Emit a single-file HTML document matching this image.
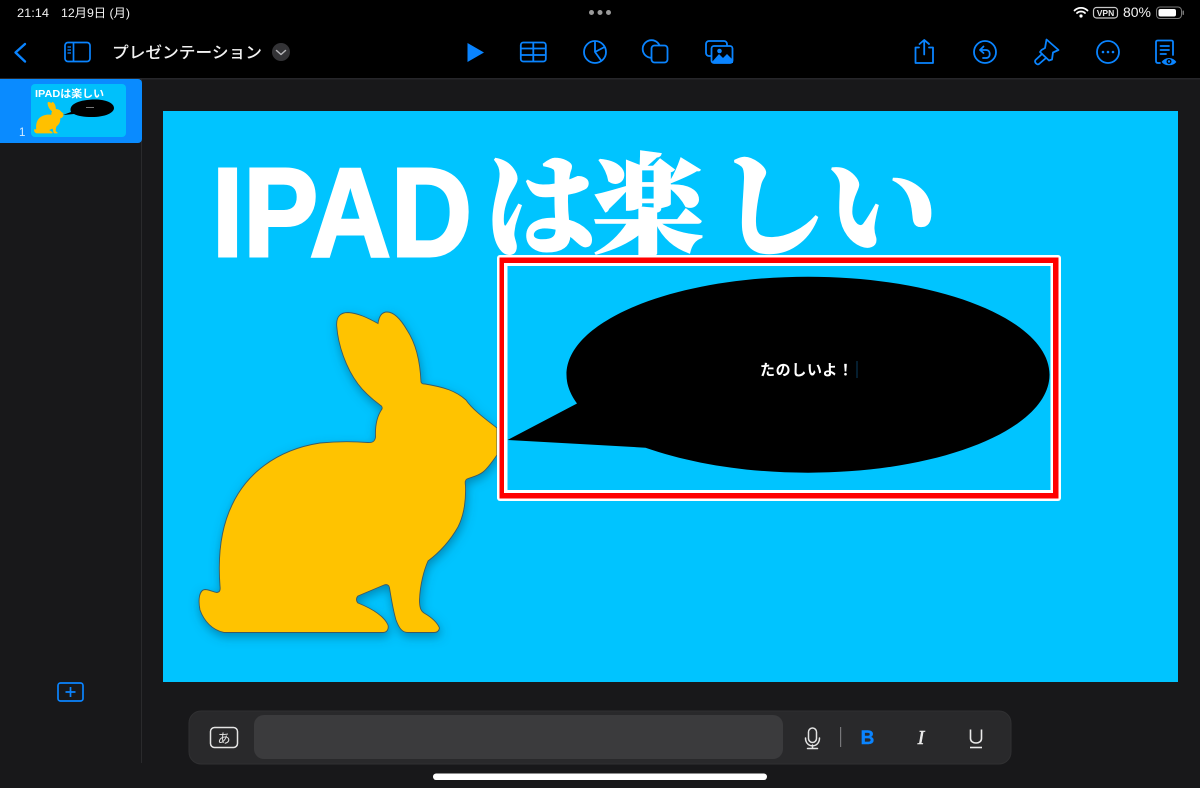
<!DOCTYPE html>
<html lang="ja"><head><meta charset="utf-8"><title>プレゼンテーション</title>
<style>
html,body{margin:0;padding:0;background:#18181a}
body{width:1200px;height:788px;overflow:hidden;position:relative;font-family:"Liberation Sans","Noto Sans CJK JP",sans-serif}
svg{position:absolute;left:0;top:0}
</style></head><body>
<svg width="1200" height="788" viewBox="0 0 1200 788" xmlns="http://www.w3.org/2000/svg">
<defs>
<filter id="sh" x="-10%" y="-10%" width="120%" height="120%"><feDropShadow dx="1" dy="4" stdDeviation="5" flood-color="#00506e" flood-opacity=".5"/></filter>
<path id="rab" d="M336.7 326C336 316 341 312.500 348 312.500C358 313 368 318 378 323.500C379 316 382 312 387 312C393 312 400 318 407 330C415 342 420 358 421 382C422 384 423 384 425 384C444 387 456 391 466 400C472 409 484 418 497 428L497 455C492 462 488 468 483 472C478 476 472 477 467 479C465 480 465 482 465.500 486C466 500 464 515 458 527C450 541 440 552 428 561C424 570 420 585 419.500 600C419.500 608 421 611 424 613C431 617 437 622 439.500 628C439 631 437 632.500 434 632.500L408 632.500C402 632.500 399 628 396 620C393 610 391 597 389.500 588C389 585 387 584 384 585L358 596C356 598 356 601 358 603C368 607 383 614 388 625C389 629 387 632.500 383 632.500L224 632.500C212 630 204 621 200 610C198 600 199 590 205 589.500C209 589.500 213 592 217 592.500C220 592 220.500 590 220 586C218 560 220 530 232 505C246 475 275 450 320 443C340 441 355 441.500 368 442.500C373 443 375 441 375.500 437C375 425 377 416 382 409C382.500 407 382 406 380 405C372 399 364 392 358 384C346 368 338 345 336.700 326Z"/>
</defs>

<!-- top bar -->
<rect width="1200" height="78" fill="#000"/>
<rect y="78" width="1200" height="1.500" fill="#26262a"/>
<text x="17" y="17" fill="#f2f2f2" font-size="12" textLength="32" lengthAdjust="spacingAndGlyphs">21:14</text>
<text x="61" y="17" fill="#f2f2f2" font-size="12" textLength="69" lengthAdjust="spacingAndGlyphs">12月9日 (月)</text>
<circle cx="591.500" cy="12.500" r="2.500" fill="#9a9a9a"/><circle cx="600" cy="12.500" r="2.500" fill="#9a9a9a"/><circle cx="608.500" cy="12.500" r="2.500" fill="#9a9a9a"/>

<!-- status right -->
<g fill="none" stroke="#fff" stroke-linecap="round">
<path d="M1074.500 10.500C1078 7 1084 7 1087.500 10.500" stroke-width="1.800"/>
<path d="M1077 13C1079 11 1083 11 1085 13" stroke-width="1.800"/>
</g>
<circle cx="1081" cy="16" r="1.600" fill="#fff"/>
<rect x="1093.500" y="7.500" width="24" height="10.500" rx="3" fill="none" stroke="#c8c8c8" stroke-width="1.200"/>
<text x="1105.500" y="16" fill="#e8e8e8" font-size="8.500" font-weight="700" text-anchor="middle">VPN</text>
<text x="1123" y="17" fill="#f2f2f2" font-size="13.500" textLength="28" lengthAdjust="spacingAndGlyphs">80%</text>
<rect x="1156.500" y="7" width="25" height="11.500" rx="3.500" fill="none" stroke="#777" stroke-width="1"/>
<rect x="1158.500" y="9" width="17.500" height="7.500" rx="2" fill="#fff"/>
<rect x="1182.500" y="10.500" width="1.500" height="4.500" rx=".7" fill="#777"/>

<!-- nav left -->
<path d="M25 44L15.500 52.500L25 61.500" fill="none" stroke="#0a84ff" stroke-width="2.400" stroke-linecap="round" stroke-linejoin="round"/>
<g fill="none" stroke="#0a84ff" stroke-width="1.700">
<rect x="65" y="42.500" width="25" height="19" rx="3"/><path d="M73.500 42.500V61.500"/>
<path d="M67.500 47H71M67.500 50H71M67.500 53H71" stroke-width="1.300"/>
</g>
<text x="112" y="58" fill="#f2f2f2" font-size="16" font-weight="500" textLength="150" lengthAdjust="spacingAndGlyphs" font-family="'Noto Sans CJK JP',sans-serif">プレゼンテーション</text>
<circle cx="281" cy="52" r="9" fill="#333336"/>
<path d="M276.500 50.500L281 54.500L285.500 50.500" fill="none" stroke="#b5b5b8" stroke-width="1.500" stroke-linecap="round" stroke-linejoin="round"/>

<!-- centre toolbar -->
<path d="M467.500 43L484 52.500L467.500 62Z" fill="#0a84ff"/>
<g fill="none" stroke="#0a84ff" stroke-width="1.800" stroke-linejoin="round">
<rect x="520.800" y="42.500" width="25" height="19" rx="2.500"/>
<path d="M521 48.500H545.500M521 55H545.500M533.300 42.500V61.500"/>
<circle cx="595" cy="52" r="11"/>
<path d="M595 41V52L601.500 61M595 52L604.500 47"/>
<circle cx="651.500" cy="49" r="8.800"/>
<rect x="651.500" y="45.500" width="16" height="17" rx="3" fill="#000"/>
<rect x="706" y="41" width="21" height="15" rx="3"/>
</g>
<rect x="711.500" y="46" width="21" height="17" rx="2.500" fill="#000" stroke="#0a84ff" stroke-width="1.800"/>
<path d="M712 62L719 54L723 58L727 54L733 60V63H712Z" fill="#0a84ff"/>
<circle cx="719.500" cy="51" r="2.300" fill="#0a84ff"/>

<!-- right toolbar -->
<g fill="none" stroke="#0a84ff" stroke-width="1.800" stroke-linecap="round" stroke-linejoin="round">
<path d="M919 47.500H915.500V63H933V47.500H929"/><path d="M924.200 54.500V40M919.500 44L924.200 40L929 44"/>
<circle cx="985" cy="52" r="11"/>
<path d="M983.500 46.500L980 50L983.500 53"/><path d="M980.500 50H986C991 50 991 58 986 58H983"/>
<path d="M1046.500 39.500L1058.500 50L1053 52.500L1052 59.500L1049 60.500L1040 52L1041.500 50L1045 48Z"/>
<path d="M1042 54L1035.500 60C1034 62 1037 65.500 1039 64L1046 58"/>
<circle cx="1108" cy="52" r="11"/>
<path d="M1160 63H1158C1156.500 63 1156 62 1156 61V42C1156 41 1156.800 40.500 1158 40.500H1171C1172.200 40.500 1173 41 1173 42V55"/>
<path d="M1160.500 46H1169M1160.500 50H1169M1160.500 54H1166"/>
</g>
<circle cx="1103" cy="52" r="1.300" fill="#0a84ff"/><circle cx="1108" cy="52" r="1.300" fill="#0a84ff"/><circle cx="1113" cy="52" r="1.300" fill="#0a84ff"/>
<path d="M1161 62C1165 56 1173 56 1177 62C1173 67 1165 67 1161 62Z" fill="#0a84ff" stroke="#000" stroke-width="1"/>
<circle cx="1169" cy="61.500" r="2.500" fill="#000"/><circle cx="1169" cy="61.500" r="1.200" fill="#0a84ff"/>

<!-- sidebar -->
<rect x="141" y="79" width="1" height="684" fill="#2a2a2c"/>
<rect x="-4" y="79" width="146" height="64" rx="4" fill="#0a8bff"/>
<rect x="31" y="84" width="95" height="53" rx="4" fill="#00c0fb"/>
<text x="35" y="97" fill="#fff" font-size="10.500" font-weight="700" textLength="69" lengthAdjust="spacingAndGlyphs">IPADは楽しい</text>
<path d="M63 115L71 112C68 104 80 99.500 95 99.500C106 99.500 114 103 114 108C114 113 105 117 92 117C84 117 78 116 74 114Z" fill="#000"/>
<rect x="86" y="107" width="8" height="1" fill="#777"/>
<use href="#rab" fill="#ffc000" transform="translate(14.600 71.400) scale(.098)"/>
<text x="19" y="136" fill="#d5ecff" font-size="11.500">1</text>
<g fill="none" stroke="#0a84ff" stroke-width="1.700">
<rect x="58" y="683" width="25" height="18" rx="2.500"/>
<path d="M70.500 687V697M65.500 692H75.500"/>
</g>

<!-- slide -->
<rect x="163" y="111" width="1015" height="571" fill="#00c4ff"/>
<text x="212" y="256" fill="#fff" stroke="#fff" stroke-width="3" font-family="'Liberation Sans',sans-serif" font-weight="700" font-size="126" textLength="260" lengthAdjust="spacingAndGlyphs">IPAD</text>
<g fill="#fff" stroke="#fff" stroke-width="1.500" font-family="'Noto Serif CJK SC','Noto Serif CJK JP',serif" font-weight="900" font-size="112">
<text x="484" y="247">は</text>
<text x="592" y="247">楽</text>
<text x="716" y="247">し</text>
<text x="826" y="247">い</text>
</g>
<use href="#rab" fill="#ffc300" stroke="#3b5a66" stroke-width=".9" filter="url(#sh)"/>

<!-- selection -->
<rect x="497" y="255" width="564" height="246" rx="3" fill="#fff"/>
<rect x="499.500" y="257.500" width="559" height="241" fill="#f00"/>
<rect x="504" y="263" width="549" height="230" fill="#fff"/>
<rect x="507.500" y="266" width="543" height="224" fill="#00c4ff"/>
<path d="M507.500 440L577 403.500C569.500 393 566.500 384 566.500 374.700C566.500 320.500 674.500 276.700 808 276.700C941.500 276.700 1049.500 320.500 1049.500 374.700C1049.500 428.900 941.500 472.700 808 472.700C747 472.700 691 463.500 645.500 447.700Z" fill="#000"/>
<text x="760" y="375" fill="#fff" font-size="15" font-weight="700" font-family="'Noto Sans CJK JP',sans-serif" textLength="93" lengthAdjust="spacing">たのしいよ！</text>
<rect x="856.500" y="361" width="1" height="17" fill="#0a3c5e"/>

<!-- bottom bar -->
<rect x="189" y="711" width="822" height="53" rx="12" fill="#29292b" stroke="#303032" stroke-width="1"/>
<rect x="254" y="715" width="529" height="44" rx="10" fill="#3b3b3d"/>
<rect x="210.500" y="727.500" width="27" height="20" rx="4" fill="none" stroke="#e4e4e4" stroke-width="1.500"/>
<text x="224" y="743" fill="#e4e4e4" font-size="13" text-anchor="middle" font-family="'Noto Sans CJK JP',sans-serif">あ</text>
<g fill="none" stroke="#e2e2e2" stroke-width="1.500" stroke-linecap="round">
<rect x="808.500" y="728" width="8" height="14.500" rx="4"/>
<path d="M805.500 738C805.500 748.500 819.500 748.500 819.500 738M812.500 745V748M807.500 748.500H817.500"/>
</g>
<rect x="840" y="727" width="1.200" height="20" fill="#77777a"/>
<text x="867.500" y="744" fill="#0a84ff" stroke="#0a84ff" stroke-width=".4" font-size="19" font-weight="700" text-anchor="middle">B</text>
<text x="921" y="744" fill="#eaeaea" stroke="#eaeaea" stroke-width=".5" font-size="20" font-style="italic" text-anchor="middle" font-family="'Liberation Serif',serif">I</text>
<g fill="none" stroke="#eaeaea" stroke-width="1.600">
<path d="M970.500 729.500V738.500C970.500 744.500 981.500 744.500 981.500 738.500V729.500"/>
<path d="M970 747.500H982"/>
</g>

<rect x="433" y="773.500" width="334" height="6.500" rx="3.200" fill="#fff"/>
</svg>
</body></html>
